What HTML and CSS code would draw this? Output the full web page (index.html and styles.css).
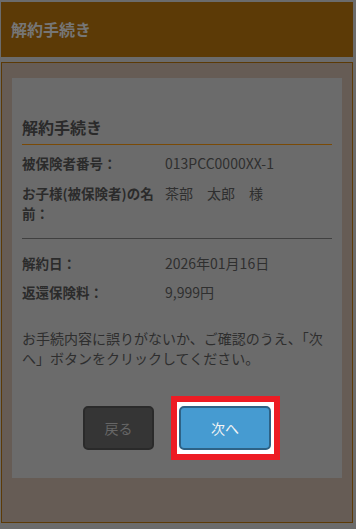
FILE: index.html
```html
<!DOCTYPE html>
<html lang="ja">
<head>
    <meta charset="UTF-8">
    <meta name="viewport" content="width=device-width, initial-scale=1.0">
    <link rel="stylesheet" href="styles.css">
    <title>解約手続き</title>
</head>
<body>

    <header class="page-header">解約手続き</header>

    <main class="panel">
        <section class="card">
            <h2 class="card-title">解約手続き</h2>

            <div class="row first">
                <div class="label">被保険者番号：</div>
                <div class="value">013PCC0000XX-1</div>
            </div>
            <div class="row">
                <div class="label">お子様(被保険者)の名前：</div>
                <div class="value">茶部　太郎　様</div>
            </div>

            <hr class="divider">

            <div class="row after-divider">
                <div class="label">解約日：</div>
                <div class="value">2026年01月16日</div>
            </div>
            <div class="row tight">
                <div class="label">返還保険料：</div>
                <div class="value">9,999円</div>
            </div>

            <p class="notice">お手続内容に誤りがないか、ご確認のうえ、「次へ」ボタンをクリックしてください。</p>

            <div class="buttons">
                <button class="btn btn-back">戻る</button>
                <button class="btn btn-next">次へ</button>
            </div>
        </section>
    </main>

</body>
</html>
```

FILE: styles.css
```css
body {
    margin: 0;
    padding: 2px 3px 0 1px;
    background-color: #6b6b6b;
    font-family: 'Noto Sans CJK JP', 'Noto Sans', sans-serif;
    color: #2b2b2b;
}

.page-header {
    height: 55px;
    line-height: 55px;
    padding-left: 10px;
    background-color: #5c3a06;
    color: #767676;
    font-size: 16px;
    font-weight: bold;
}

.panel {
    margin-top: 5px;
    padding: 15px 10px 44px;
    border: 1px solid #5c3a06;
    background-color: #665c55;
}

.card {
    padding: 37px 10px 28px;
    background-color: #6b6b6b;
}

.card-title {
    margin: 0;
    padding-bottom: 5px;
    border-bottom: 1px solid #7a4a06;
    font-size: 16px;
    line-height: 24px;
    font-weight: bold;
    color: #2a2a2a;
}

.row {
    display: flex;
    margin-top: 10px;
    font-size: 14px;
    line-height: 20px;
}

.row.first {
    margin-top: 8px;
}

.row.after-divider {
    margin-top: 14px;
}

.row.tight {
    margin-top: 9px;
}

.label {
    width: 139px;
    padding-right: 4px;
    flex-shrink: 0;
    font-size: 13.5px;
    font-weight: bold;
    color: #2b2b2b;
}

.value {
    color: #2f2f2f;
}

.divider {
    margin: 15px 0 0;
    border: none;
    border-top: 1px solid #404040;
}

.notice {
    margin: 26px 0 0;
    font-size: 14px;
    line-height: 20px;
    color: #2e2e2e;
}

.buttons {
    display: flex;
    justify-content: center;
    gap: 25px;
    margin-top: 38px;
}

.btn {
    height: 44px;
    border-radius: 5px;
    font-family: inherit;
    font-size: 14px;
    cursor: pointer;
}

.btn-back {
    width: 71px;
    background-color: #353535;
    border: 2px solid #2a2a2a;
    color: #666666;
}

.btn-next {
    position: relative;
    width: 92px;
    background-color: #469bd1;
    border: 2px solid #2d6286;
    color: #f4f4f4;
}

/* highlight frame drawn over the dimmed page */
.btn-next::before {
    content: '';
    position: absolute;
    top: -12px;
    left: -10px;
    right: -11px;
    bottom: -12px;
    z-index: -1;
    background-color: #ffffff;
    border: 6px solid #ed1c24;
}

.buttons {
    position: relative;
    z-index: 0;
}
```
